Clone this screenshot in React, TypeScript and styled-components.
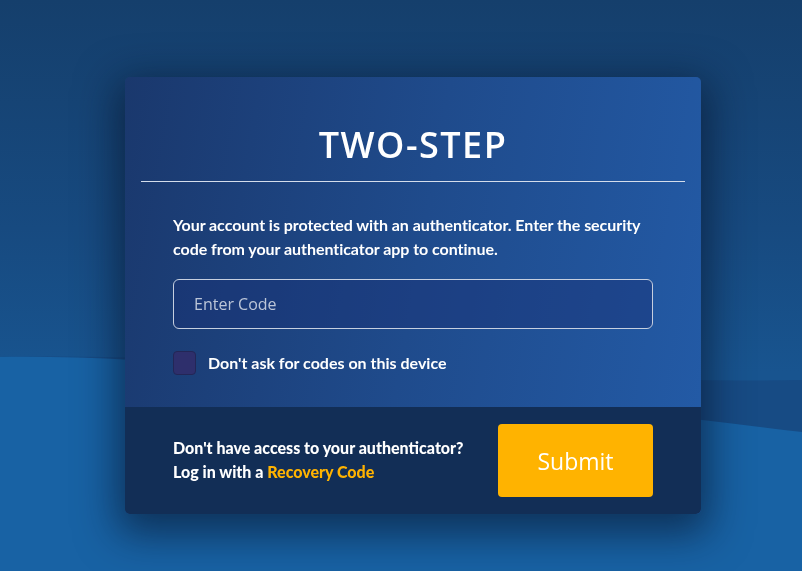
import React, { useState } from 'react';
import styled, { createGlobalStyle } from 'styled-components';

const GlobalStyle = createGlobalStyle`
  html, body {
    margin: 0;
    padding: 0;
    height: 100%;
  }
  body {
    background: linear-gradient(180deg, #153f6c 0%, #174a80 40%, #18548f 65%);
    font-family: 'Lato', 'Open Sans', sans-serif;
    overflow: hidden;
  }
  #root {
    min-height: 100vh;
  }
`;

const Backdrop = styled.svg`
  position: fixed;
  inset: 0;
  width: 100%;
  height: 100%;
  z-index: 0;
`;

const Page = styled.main`
  position: relative;
  z-index: 1;
  display: flex;
  justify-content: center;
  padding: 77px 0 0 24px;
  box-sizing: border-box;
  min-height: 100vh;
`;

const Card = styled.section`
  width: 576px;
  border-radius: 5px;
  overflow: hidden;
  background: linear-gradient(100deg, #1a386d 0%, #1f4b8c 50%, #235ba7 100%);
  box-shadow: 0 12px 40px 8px rgba(6, 18, 40, 0.6);
  align-self: flex-start;
`;

const Body = styled.div`
  padding: 0 16px 32px;
`;

const Title = styled.h1`
  margin: 0;
  padding: 48px 0 16px;
  text-align: center;
  font-family: 'Open Sans', sans-serif;
  font-weight: 600;
  font-size: 36px;
  letter-spacing: 1.5px;
  color: #ffffff;
  line-height: 40px;
  border-bottom: 1px solid #d4ddeb;
`;

const Inner = styled.div`
  padding: 31px 32px 0;
  display: flex;
  flex-direction: column;
`;

const Intro = styled.p`
  margin: 0;
  color: #ffffff;
  font-size: 16px;
  font-weight: 700;
  line-height: 24px;
  letter-spacing: -0.05px;
`;

const CodeInput = styled.input`
  margin-top: 18px;
  height: 50px;
  box-sizing: border-box;
  border: 1px solid #c6cfdf;
  border-radius: 6px;
  background: rgba(24, 48, 118, 0.45);
  padding: 0 20px;
  color: #ffffff;
  font-family: 'Open Sans', sans-serif;
  font-size: 16px;
  outline: none;

  &::placeholder {
    color: #bcc6d8;
  }
`;

const CheckRow = styled.label`
  margin-top: 22px;
  display: flex;
  align-items: center;
  gap: 12px;
  color: #ffffff;
  font-size: 16px;
  font-weight: 700;
  line-height: 20px;
  cursor: pointer;
`;

const Box = styled.span<{ checked: boolean }>`
  width: 23px;
  height: 24px;
  box-sizing: border-box;
  border-radius: 4px;
  border: 1px solid #232656;
  background: ${(p) => (p.checked ? '#ffb300' : '#2e2f6c')};
`;

const Footer = styled.footer`
  background: #122e56;
  padding: 17px 48px 17px 48px;
  display: flex;
  align-items: center;
  justify-content: space-between;
`;

const Help = styled.p`
  margin: 0 0 2px;
  color: #ffffff;
  font-size: 16px;
  font-weight: 900;
  line-height: 24px;
  letter-spacing: 0px;
`;

const Link = styled.a`
  color: #ffb300;
  text-decoration: none;
`;

const SubmitButton = styled.button`
  width: 155px;
  height: 73px;
  border: none;
  border-radius: 4px;
  background: #ffb300;
  color: #ffffff;
  font-family: 'Open Sans', sans-serif;
  font-size: 23px;
  cursor: pointer;
`;

const App: React.FC = () => {
  const [remember, setRemember] = useState<boolean>(false);
  const [code, setCode] = useState<string>('');

  return (
    <>
      <GlobalStyle />
      <Backdrop viewBox='0 0 802 571' preserveAspectRatio='none'>
        <path d='M0 357 C 250 352, 500 385, 802 380 L802 571 L0 571 Z' fill='#174b84' />
        <path d='M0 357 C 200 354, 450 390, 802 432 L802 571 L0 571 Z' fill='#1862a4' />
      </Backdrop>
      <Page>
        <Card>
          <Body>
            <Title>TWO-STEP</Title>
            <Inner>
              <Intro>
                Your account is protected with an authenticator. Enter the security code from
                your authenticator app to continue.
              </Intro>
              <CodeInput
                type='text'
                placeholder='Enter Code'
                value={code}
                onChange={(e) => setCode(e.target.value)}
              />
              <CheckRow onClick={() => setRemember(!remember)}>
                <Box checked={remember} />
                Don't ask for codes on this device
              </CheckRow>
            </Inner>
          </Body>
          <Footer>
            <Help>
              Don't have access to your authenticator?
              <br />
              Log in with a <Link href='#'>Recovery Code</Link>
            </Help>
            <SubmitButton>Submit</SubmitButton>
          </Footer>
        </Card>
      </Page>
    </>
  );
};

export default App;
